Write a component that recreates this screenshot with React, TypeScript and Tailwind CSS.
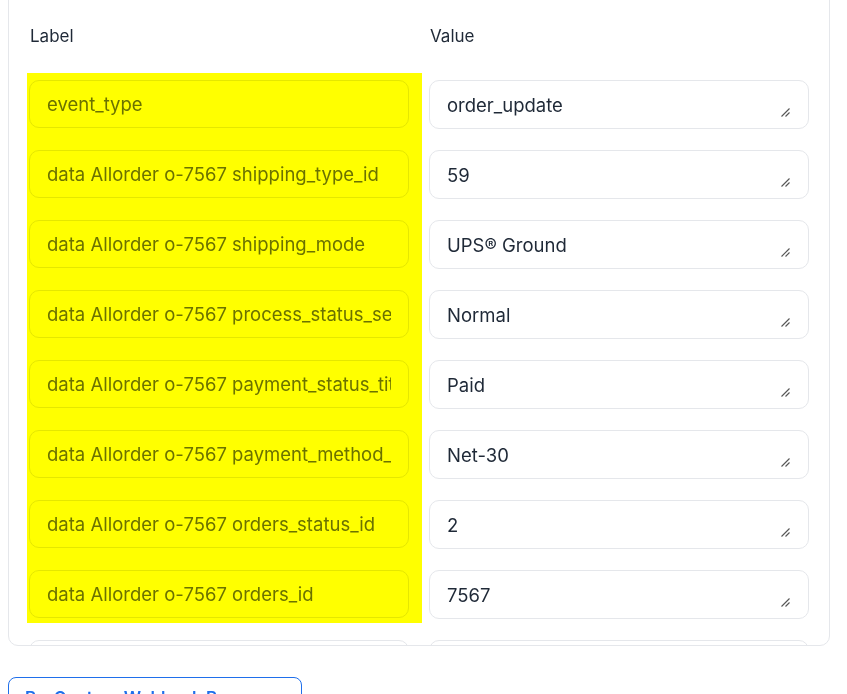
import React from "react";

const rows: [string, string][] = [
  ["event_type", "order_update"],
  ["data Allorder o-7567 shipping_type_id", "59"],
  ["data Allorder o-7567 shipping_mode", "UPS® Ground"],
  ["data Allorder o-7567 process_status_set", "Normal"],
  ["data Allorder o-7567 payment_status_title", "Paid"],
  ["data Allorder o-7567 payment_method_title", "Net-30"],
  ["data Allorder o-7567 orders_status_id", "2"],
  ["data Allorder o-7567 orders_id", "7567"],
  ["data Allorder o-7567 customers_id", "412"],
];

function Grip() {
  return (
    <svg
      className="absolute right-[18px] bottom-[11px]"
      width="9"
      height="9"
      viewBox="0 0 9 9"
    >
      <line x1="0.5" y1="8.5" x2="8.5" y2="0.5" stroke="#555" strokeWidth="1.1" />
      <line x1="4.5" y1="8.5" x2="8.5" y2="4.5" stroke="#555" strokeWidth="1.1" />
    </svg>
  );
}

export default function App() {
  return (
    <div
      className="bg-white w-[847px] h-[694px] overflow-hidden"
      style={{ fontFamily: "Inter, 'Noto Sans', sans-serif" }}
    >
      <div className="relative ml-2 mt-[-20px] w-[822px] h-[666px] overflow-hidden rounded-[10px] border border-[#e5e7eb] bg-white px-5 pt-[44px]">
        <div className="grid grid-cols-2 gap-5 text-[17px] leading-[22px] text-[#1f2937]">
          <div className="pl-px">Label</div>
          <div className="pl-px">Value</div>
        </div>
        <div className="mt-[33px] flex flex-col gap-[21px]">
          {rows.map(([label, value]) => (
            <div key={label} className="grid grid-cols-2 gap-5">
              <input
                readOnly
                defaultValue={label}
                className="h-[48px] w-full rounded-[10px] border border-[#e5e7eb] bg-white px-[17px] text-[18.5px] text-[#6b7280] outline-none"
              />
              <div className="relative h-[49px] rounded-[10px] border border-[#e5e7eb] bg-white px-[17px] pt-[12px] text-[18.5px] leading-6 text-[#1f2937]">
                {value}
                <Grip />
              </div>
            </div>
          ))}
        </div>
        <div className="pointer-events-none absolute left-[18px] top-[92px] h-[550px] w-[395px] bg-[#ffff00] mix-blend-multiply" />
      </div>
      <button className="ml-2 mt-[31px] w-[294px] whitespace-nowrap rounded-lg border border-[#1f6feb] bg-white px-4 pt-[8px] pb-[10px] text-left text-[17px] leading-6 font-semibold text-[#1f6feb]">
        Re-Capture Webhook Response
      </button>
    </div>
  );
}
